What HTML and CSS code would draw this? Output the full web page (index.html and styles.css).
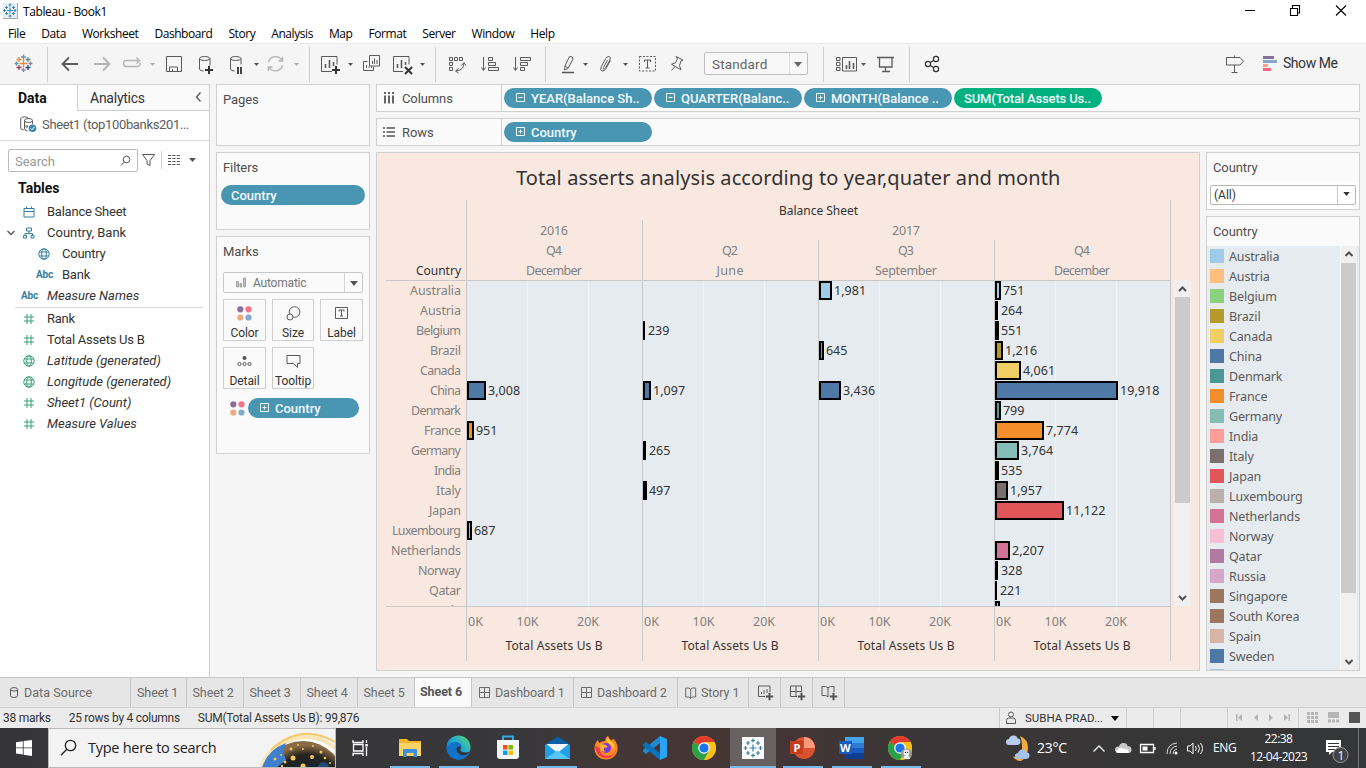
FILE: index.html
```html
<!DOCTYPE html>
<html lang="en">
<head>
<meta charset="utf-8">
<title>Tableau - Book1</title>
<link rel="stylesheet" href="styles.css">
</head>
<body>
<svg class="defs" width="0" height="0">
  <symbol id="caret" viewBox="0 0 8 5"><path d="M0 0h8L4 5z" fill="currentColor"/></symbol>
  <symbol id="cal" viewBox="0 0 12 12"><path d="M1 2.500h10v8.500h-10zM1 5.500h10M3.500 .5v2M8.500 .5v2" class="ln"/></symbol>
  <symbol id="globe" viewBox="0 0 12 12"><circle cx="6" cy="6" r="5.200" class="ln"/><path d="M1.300 4h9.400M1.300 8h9.400" class="ln"/><ellipse cx="6" cy="6" rx="2.300" ry="5.200" class="ln"/></symbol>
  <symbol id="hash" viewBox="0 0 12 12"><path d="M1 4h10M1 8h10M4 1v10M8 1v10" class="ln"/></symbol>
  <symbol id="tree" viewBox="0 0 12 12"><path d="M3.500 1h5v3h-5zM.5 8.500h3v2.500h-3zM8 8.500h3v2.500h-3zM6 4v2.500M2 8.500v-2h7.500v2" class="ln"/></symbol>
  <symbol id="plusbox" viewBox="0 0 10 10"><path d="M.5 .5h8v8h-8zM2.500 4.500h4M4.500 2.500v4" class="ln"/></symbol>
  <symbol id="minusbox" viewBox="0 0 10 10"><path d="M.5 .5h8v8h-8zM2.500 4.500h4" class="ln"/></symbol>
  <symbol id="dots" viewBox="0 0 15 15"><circle cx="3.300" cy="3.300" r="3.100" fill="#8a6f9c"/><circle cx="11.500" cy="3.300" r="3.100" fill="#fb7185"/><circle cx="3.300" cy="11.500" r="3.100" fill="#f2a97d"/><circle cx="11.500" cy="11.500" r="3.100" fill="#84a9cf"/></symbol>
  <symbol id="grid4" viewBox="0 0 12 12"><path d="M.5 .5h10v10h-10zM5.500 .5v10M.5 5.500h10" class="ln"/></symbol>
  <symbol id="book" viewBox="0 0 12 12"><path d="M.7 1h3l2 1.200 2-1.200h3v9h-3l-2 1.300-2-1.300h-3zM5.700 2.200v9" class="ln"/></symbol>
  <symbol id="bigplus" viewBox="0 0 8 8"><path d="M4 0v8M0 4h8" stroke="#555" stroke-width="2"/></symbol>
  <symbol id="chrome" viewBox="0 0 24 24"><circle cx="12" cy="12" r="12" fill="#fbc116"/><path d="M12 12L1.600 6A12 12 0 0 1 22.400 6z" fill="#e33b2e"/><path d="M12 12L1.600 6A12 12 0 0 0 12 24l5.200-9z" fill="#2aa14a"/><path d="M12 6h10.400A12 12 0 0 1 12 24l5.200-9z" fill="#fbc116"/><circle cx="12" cy="12" r="5.800" fill="#fff"/><circle cx="12" cy="12" r="4.600" fill="#1a73e8"/></symbol>
</svg>

<header class="titlebar">
  <svg class="app-icon" width="15" height="16" viewBox="0 0 15 16"><path fill="#e9eef2" d="M0 0h15v16h-15z"/><path d="M14.500 0v15.500h-14.500" stroke="#aaa" fill="none"/><path d="M7 4.500v6M4 7.500h6M7 .5v3M5.500 2h3M7 11.500v3M5.500 13h3M1.500 6v3M0 7.500h3M12 6v3M10.500 7.500h3M3.500 3v3M2 4.500h3M10.500 3v3M9 4.500h3M3.500 9v3M2 10.500h3M10.500 9v3M9 10.500h3" stroke="#3789b5"/></svg>
  <span class="title">Tableau - Book1</span>
  <svg class="winbtns" width="126" height="22" viewBox="1240 0 126 22"><path d="M1245 10.500h10M1290.500 8.500h7v7h-7zM1292.500 8v-2.500h7v7.500h-2M1336 5.500l10 10M1346 5.500l-10 10" fill="none" stroke="#000" stroke-width="1.100"/></svg>
</header>
<nav class="menubar"><span>File</span><span>Data</span><span>Worksheet</span><span>Dashboard</span><span>Story</span><span>Analysis</span><span>Map</span><span>Format</span><span>Server</span><span>Window</span><span>Help</span></nav>

<div class="toolbar">
  <svg width="48" height="40" viewBox="0 44 48 40"><g stroke-width="1.300" fill="none"><path stroke="#ec8a3c" d="M19.500 63.500h8M23.500 59.500v8M16.500 59.500h5M19 57v5"/><path stroke="#6b93b0" d="M21 57h5M23.500 54.500v5M14.500 63.500h4M16.500 61.500v4"/><path stroke="#5b8a92" d="M25.500 59.500h5M28 57v5"/><path stroke="#a0405a" d="M16.500 67.500h5M19 65v5"/><path stroke="#2c4a82" d="M25.500 67.500h5M28 65v5"/><path stroke="#7d88b2" d="M28.500 63.500h4M30.500 61.500v4M21.500 70h4M23.500 68v4"/></g><path d="M47.500 47v35" class="sep"/></svg>
  <svg width="42" height="40" viewBox="48 44 42 40"><path d="M78 64h-15.500M69 57.500l-6.500 6.500 6.500 6.500" class="ic" stroke-width="1.800"/></svg>
  <svg width="28" height="40" viewBox="90 44 28 40"><path d="M94 64h15.500M103 57.500l6.500 6.500-6.500 6.500" class="ic off" stroke-width="1.800"/></svg>
  <svg width="42" height="40" viewBox="118 44 42 40"><path d="M129 66.500h-2.500a3 3 0 0 1 0-6h11.500M136.500 57.500l3 3-3 3M129 66.500h8.500a3 3 0 0 0 2.500-4" class="ic off" stroke-width="1.400"/><path d="M150 63h5l-2.500 3z" fill="#aaa"/></svg>
  <svg width="28" height="40" viewBox="160 44 28 40"><path d="M166.500 56.500h15v15h-15zM169.500 71.500v-4.500h8v4.500M172.500 69v2.500" class="ic"/></svg>
  <svg width="32" height="40" viewBox="188 44 32 40"><path d="M199.500 58.500v10.500q0 2 4 2M210 58.500v7" class="ic"/><ellipse cx="204.700" cy="58.500" rx="5.200" ry="2" class="ic"/><path d="M209 66v8M205 70h8" stroke="#333" stroke-width="2"/></svg>
  <svg width="42" height="40" viewBox="220 44 42 40"><path d="M230.500 58.500v10.500q0 2 4 2M241 58.500v6" class="ic"/><ellipse cx="235.700" cy="58.500" rx="5.200" ry="2" class="ic"/><path d="M238 67v7M241 67v7" stroke="#333" stroke-width="1.800"/><path d="M254 63h5l-2.500 3z" fill="#555"/></svg>
  <svg width="43" height="40" viewBox="262 44 43 40"><path d="M268.500 62a7.300 7.300 0 0 1 13.500-1.500M282.500 65.500a7.300 7.300 0 0 1-13.500 1.500M282.500 57v4h-4M268.500 71v-4h4" class="ic off" stroke-width="1.400"/><path d="M294 63h5l-2.500 3z" fill="#aaa"/></svg>
  <svg width="52" height="40" viewBox="305 44 52 40"><path d="M309.500 47v35" class="sep"/><path d="M332 71.500h-10.500v-15h15.500v8" class="ic"/><path d="M325.500 64v4M329.500 60v8M333.500 62v4" class="ic" stroke-width="1.600"/><path d="M336 66v8M332 70h8" stroke="#333" stroke-width="2"/><path d="M348 63h5l-2.500 3z" fill="#555"/></svg>
  <svg width="29" height="40" viewBox="357 44 29 40"><path d="M369.500 55.500h10v10.500h-10zM367.500 61.500h-4v9h10v-3.500M366.500 65v3M369 68v-1.500M371.500 68v-1.500M372.500 61v3M374.500 58.500v5.500M377 60v4" class="ic"/></svg>
  <svg width="50" height="40" viewBox="386 44 50 40"><path d="M403 71.500h-9.500v-15h15.500v8" class="ic"/><path d="M397.500 64v4M401.500 60v8M405.500 62v3" class="ic" stroke-width="1.600"/><path d="M405 67l7 7M412 67l-7 7" stroke="#333" stroke-width="2"/><path d="M420 63h5l-2.500 3z" fill="#555"/><path d="M435.500 47v35" class="sep"/></svg>
  <svg width="38" height="40" viewBox="436 44 38 40"><path d="M449.500 57.500h3v3h-3zM454.500 57.500h3v3h-3zM459.500 57.500h3v3h-3zM449.500 62.500h3v3h-3zM449.500 67.500h3v3h-3zM464 63q0 7-8 8M461.500 65.500l2.500-3 2 3M458.500 68.500l-3 2.500 3 2" class="ic"/></svg>
  <svg width="32" height="40" viewBox="474 44 32 40"><path d="M483.500 57v13M481.500 67.500l2 3 2-3M488.500 57.500h4v3h-4zM488.500 62.500h7v3h-7zM488.500 67.500h10v3h-10z" class="ic"/></svg>
  <svg width="40" height="40" viewBox="506 44 40 40"><path d="M515.500 57v13M513.500 67.500l2 3 2-3M520.500 57.500h10v3h-10zM520.500 62.500h7v3h-7zM520.500 67.500h4v3h-4z" class="ic"/><path d="M545.500 47v35" class="sep"/></svg>
  <svg width="46" height="40" viewBox="546 44 46 40"><path d="M569.500 56.500q3.500-.5 3.500 2.500l-5 9.500-3.500 1.500.5-4zM565 66l3 2" class="ic"/><path d="M562 72.500h12" stroke="#555" stroke-width="1.500"/><path d="M583 63h5l-2.500 3z" fill="#555"/></svg>
  <svg width="40" height="40" viewBox="592 44 40 40"><path d="M607.500 60l-4 7.500q-.8 2 .8 1.500 1-.3 1.500-1.500l4-7.500q1.500-3.500-1-3.500-2 0-3 2l-4.500 8q-1.500 4 .7 4.500 2.500.5 4-2.500l4.500-8" class="ic"/><path d="M623 63h5l-2.500 3z" fill="#555"/></svg>
  <svg width="30" height="40" viewBox="632 44 30 40"><path d="M639.500 56.500h16v14.500h-16z" class="ic" stroke-dasharray="2 1.500" stroke="#888"/><path d="M644.500 62v-2h6v2M647.500 60v8M645.500 68h4" class="ic"/></svg>
  <svg width="42" height="40" viewBox="662 44 42 40"><path d="M676 56.500l7 3.500-2 .8-1.500 5 1.500 4-9.500-5.500 4-1.500 2-4zM675 66.500l-3.500 4" class="ic"/></svg>
  <div class="fit-select"><span>Standard</span><i><svg width="8" height="5"><use href="#caret"/></svg></i></div>
  <svg width="60" height="40" viewBox="808 44 60 40"><path d="M823.500 47v35" class="sep"/><path d="M836.500 57.500h3.500v3h-3.500zM836.500 62.500h3.500v3h-3.500zM836.500 67.500h3.500v3h-3.500zM842.500 57.500h14v13.500h-14z" class="ic"/><path d="M846.500 65v4M849.500 61v8M853.500 63v6" class="ic" stroke-width="1.600"/><path d="M861 63h5l-2.500 3z" fill="#555"/></svg>
  <svg width="42" height="40" viewBox="868 44 42 40"><path d="M877 57.500h17M879.500 57.500v9.500h12.500v-9.500M885.500 67v4M882 71.500h8" class="ic" stroke-width="1.300"/><path d="M909.500 47v35" class="sep"/></svg>
  <svg width="40" height="40" viewBox="910 44 40 40"><g class="share" fill="none" stroke="#333" stroke-width="1.200"><circle cx="928" cy="64" r="2.600"/><circle cx="936" cy="59" r="2.600"/><circle cx="936" cy="69" r="2.600"/><path d="M930.500 62.500l3-2M930.500 65.500l3 2"/></g></svg>
  <svg class="push" width="36" height="40" viewBox="1222 44 36 40"><path d="M1226.500 57.500h13.500l3.500 3.700-3.500 3.800h-13.500zM1234.500 55.500v2M1234.500 65v7.500M1231.500 72.500h6" class="ic"/></svg>
  <svg width="25" height="40" viewBox="1258 44 25 40"><path fill="#86719a" d="M1263 56h11v3h-11z"/><path fill="#82a5cb" d="M1263 60h14v3h-14z"/><path fill="#f2a97d" d="M1263 64h5v3h-5z"/><path fill="#f9687e" d="M1263 68h8v3h-8z"/></svg>
  <span class="showme">Show Me</span>
</div>

<main class="work">
  <aside class="data-pane">
    <div class="pane-tabs"><b>Data</b><span>Analytics<svg width="8" height="10" viewBox="0 0 8 10"><path d="M5.500 .5l-4 4.500 4 4.500" class="ic" stroke-width="1.400"/></svg></span></div>
    <div class="source"><svg width="17" height="17" viewBox="0 0 17 17"><path d="M.7 2.500v9.500q0 1.500 3 2M.7 2.500q4-3.500 8 0M4.500 4.500v8q0 2 3 2.500M12.500 5v3" class="ic"/><ellipse cx="8.500" cy="4.500" rx="4" ry="2" class="ic"/><path d="M5 10h3l-1.500 2" class="ic"/><circle cx="12.500" cy="12.300" r="3.800" fill="#3887ad"/><path d="M10.500 12.300l1.500 1.500 2.500-3" stroke="#fff" fill="none"/></svg><span>Sheet1 (top100banks201...</span></div>
    <div class="search-row">
      <div class="search"><span>Search</span><svg width="12" height="12" viewBox="0 0 12 12"><circle cx="6.500" cy="4.500" r="3.300" class="ic"/><path d="M4.200 7l-3.200 3.500" class="ic"/></svg></div>
      <svg width="60" height="23" viewBox="138 149 60 23"><path d="M142.500 154.500h12l-4.500 6v5l-3-1.500v-3.500z" class="ic"/><path d="M161.500 151v18" class="sep"/><path d="M168 155.500h12M168 158.500h12M168 161.500h12M168 164.500h12" stroke="#555" stroke-dasharray="3.200 1.200"/><path d="M189 158h7l-3.500 4z" fill="#555"/></svg>
    </div>
    <h3>Tables</h3>
    <ul class="fields dims">
      <li class="blue"><svg width="12" height="12"><use href="#cal"/></svg>Balance Sheet</li>
      <li class="blue grp"><svg class="chev" width="8" height="6" viewBox="0 0 8 6"><path d="M.5 1l3.500 3.500 3.500-3.500" class="ic" stroke-width="1.500"/></svg><svg width="12" height="12"><use href="#tree"/></svg>Country, Bank</li>
      <li class="blue sub"><svg width="12" height="12"><use href="#globe"/></svg>Country</li>
      <li class="blue sub"><em class="abc">Abc</em>Bank</li>
      <li class="blue gen"><em class="abc">Abc</em>Measure Names</li>
    </ul>
    <ul class="fields">
      <li class="green"><svg width="12" height="12"><use href="#hash"/></svg>Rank</li>
      <li class="green"><svg width="12" height="12"><use href="#hash"/></svg>Total Assets Us B</li>
      <li class="green gen"><svg width="12" height="12"><use href="#globe"/></svg>Latitude (generated)</li>
      <li class="green gen"><svg width="12" height="12"><use href="#globe"/></svg>Longitude (generated)</li>
      <li class="green gen"><svg width="12" height="12"><use href="#hash"/></svg>Sheet1 (Count)</li>
      <li class="green gen"><svg width="12" height="12"><use href="#hash"/></svg>Measure Values</li>
    </ul>
  </aside>

  <section class="cards">
    <div class="card pages"><h4>Pages</h4></div>
    <div class="card filters"><h4>Filters</h4><div class="pill plain">Country</div></div>
    <div class="card marks"><h4>Marks</h4>
      <div class="mark-type"><svg width="10" height="11" viewBox="0 0 10 11"><path d="M.5 4.500h2v5.500h-2zM4 6.500h1.500v3.500h-1.500zM7.500 1h2v9h-2z" fill="#bbb" stroke="#999" stroke-width=".8"/></svg><span>Automatic</span><i><svg width="8" height="5"><use href="#caret"/></svg></i></div>
      <div class="mark-grid">
        <div><svg width="15" height="15"><use href="#dots"/></svg><span>Color</span></div>
        <div><svg width="15" height="15" viewBox="0 0 15 15"><circle cx="8.500" cy="6" r="5.300" class="ic"/><circle cx="4" cy="11" r="3" class="ic cover"/></svg><span>Size</span></div>
        <div><svg width="15" height="15" viewBox="0 0 15 15"><path d="M1.500 1.500h12v11h-12zM5 5.500v-1.500h5v1.500M7.500 4v6M6 10h3" class="ic"/></svg><span>Label</span></div>
        <div><svg width="15" height="15" viewBox="0 0 15 15"><circle cx="7.500" cy="4" r="2" fill="#555"/><circle cx="2.500" cy="10" r="1.600" class="ic"/><circle cx="7.500" cy="10" r="1.600" class="ic"/><circle cx="12.500" cy="10" r="1.600" class="ic"/></svg><span>Detail</span></div>
        <div><svg width="15" height="15" viewBox="0 0 15 15"><path d="M1 1.500h13v8h-2.500v4l-4-4h-6.500z" class="ic"/></svg><span>Tooltip</span></div>
      </div>
      <div class="mark-pill"><svg width="15" height="15"><use href="#dots"/></svg><div class="pill"><svg width="10" height="10"><use href="#plusbox"/></svg>Country</div></div>
    </div>
  </section>

  <div class="canvas">
    <div class="shelf"><div class="shelf-name"><svg width="12" height="12" viewBox="0 0 12 12"><path d="M2 0v2M2 3.500v8M6 0v2M6 3.500v8M10 0v2M10 3.500v8" stroke="#555" stroke-width="1.800"/></svg>Columns</div>
      <div class="pill"><svg width="10" height="10"><use href="#minusbox"/></svg>YEAR(Balance Sh..</div><div class="pill"><svg width="10" height="10"><use href="#minusbox"/></svg>QUARTER(Balanc..</div><div class="pill"><svg width="10" height="10"><use href="#plusbox"/></svg>MONTH(Balance ..</div><div class="pill plain measure">SUM(Total Assets Us..</div></div>
    <div class="shelf"><div class="shelf-name"><svg width="12" height="12" viewBox="0 0 12 12"><path d="M0 2h2M3.500 2h8.500M0 6h2M3.500 6h8.500M0 10h2M3.500 10h8.500" stroke="#555" stroke-width="1.700"/></svg>Rows</div>
      <div class="pill"><svg width="10" height="10"><use href="#plusbox"/></svg>Country</div></div>
    <div class="view-row">
      <div class="view"><svg id="chart" width="822" height="517" viewBox="377 153 822 517"></svg></div>
      <div class="side">
        <div class="filter-card"><h4>Country</h4><div class="combo"><span>(All)</span><i><svg width="7" height="4"><use href="#caret"/></svg></i></div></div>
        <div class="legend"><h4>Country</h4><div class="legend-body"><ul id="legend"></ul>
          <div class="scroll"><svg width="16" height="16" viewBox="0 0 16 16"><path d="M4.500 10l3.500-3.500 3.500 3.500" class="arr"/></svg><b></b><svg class="down" width="16" height="16" viewBox="0 0 16 16"><path d="M4.500 6l3.500 3.500 3.500-3.500" class="arr"/></svg></div></div></div>
      </div>
    </div>
  </div>
</main>

<div class="sheets">
  <span class="tab ds"><svg width="10" height="12" viewBox="0 0 10 12"><ellipse cx="5" cy="2.300" rx="3.500" ry="1.700" class="ic"/><path d="M1.500 2.300v6.500q0 1.700 3.500 1.700t3.500-1.700v-6.500" class="ic"/></svg>Data Source</span>
  <span class="tab s1">Sheet 1</span><span class="tab">Sheet 2</span><span class="tab">Sheet 3</span><span class="tab">Sheet 4</span><span class="tab">Sheet 5</span><span class="tab on">Sheet 6</span>
  <span class="tab d1"><svg width="12" height="12"><use href="#grid4"/></svg>Dashboard 1</span><span class="tab d2"><svg width="12" height="12"><use href="#grid4"/></svg>Dashboard 2</span><span class="tab st"><svg width="12" height="12"><use href="#book"/></svg>Story 1</span>
  <span class="tab new"><svg width="17" height="16" viewBox="0 0 17 16"><path d="M8 11.500h-6.500v-10.500h11.500v6M4.500 7v2M7 5v4M10 4v4" class="ic"/><use href="#bigplus" x="8.500" y="7.500" width="8" height="8"/></svg></span>
  <span class="tab new"><svg width="17" height="16" viewBox="0 0 17 16"><path d="M8 11.500h-6.500v-10.500h11v6M7 1v10.500M1.500 6.500h11" class="ic"/><use href="#bigplus" x="8.500" y="7.500" width="8" height="8"/></svg></span>
  <span class="tab new"><svg width="17" height="16" viewBox="0 0 17 16"><path d="M1 1.500h3.500l2.500 1.300 2.500-1.300h3.500v5.500M1 1.500v9h3.500l2.500 1.300M7 3v9" class="ic"/><use href="#bigplus" x="8.500" y="7.500" width="8" height="8"/></svg></span>
</div>

<div class="status">
  <span>38 marks</span><span>25 rows by 4 columns</span><span>SUM(Total Assets Us B): 99,876</span>
  <div class="user"><svg width="12" height="14" viewBox="0 0 12 14"><circle cx="6" cy="3.500" r="2.500" class="ic"/><path d="M1.500 12.500v-3q0-2.500 2.500-2.500h4q2.500 0 2.500 2.500v3z" class="ic"/></svg><span>SUBHA PRAD...</span><svg class="uc" width="8" height="5"><use href="#caret"/></svg></div>
  <svg class="status-end" width="240" height="20" viewBox="1126 708 240 20"><path d="M1126.500 708v20M1153.500 708v20M1180.500 708v20M1227.500 708v20M1298.500 708v20" class="sep"/><g fill="#b5b5b5"><path d="M1236 714h1.500v7h-1.500zM1242 714v7l-4-3.500zM1258 714v7l-4-3.500zM1269 714v7l4-3.500zM1284 714v7l4-3.500zM1288.500 714h1.500v7h-1.500z"/><path d="M1307 712h3v3h-3zM1311 712h3v3h-3zM1315 712h3v3h-3zM1307 716h3v3h-3zM1311 716h3v3h-3zM1315 716h3v3h-3zM1307 720h3v3h-3zM1311 720h3v3h-3zM1315 720h3v3h-3zM1328 712h11v6h-11zM1328 719.500h3v3h-3zM1332 719.500h3v3h-3zM1336 719.500h3v3h-3z"/></g><path fill="#555" d="M1349 712h11v11h-11z"/></svg>
</div>

<footer class="taskbar">
  <div class="start"><svg width="16" height="16" viewBox="0 0 16 16"><path fill="#fff" d="M0 2.200l6.800-1v6.300h-6.800zM7.600 1.100l8.400-1.100v7.500h-8.400zM0 8.300h6.800v6.300l-6.800-1zM7.600 8.300h8.400v7.700l-8.400-1.200z"/></svg></div>
  <div class="win-search"><svg width="17" height="17" viewBox="0 0 17 17"><circle cx="10.500" cy="6.500" r="5.200" fill="none" stroke="#222" stroke-width="1.300"/><path d="M6.800 10.200l-5.800 6" stroke="#222" stroke-width="1.300"/></svg><span>Type here to search</span>
    <svg class="earth" width="76" height="38" viewBox="260 729 76 38"><defs><radialGradient id="eg" cx=".55" cy=".6" r=".55"><stop offset=".5" stop-color="#14232e"/><stop offset=".8" stop-color="#27241f"/><stop offset="1" stop-color="#8a6b45"/></radialGradient></defs><circle cx="305" cy="780" r="46" fill="#f9e4b5"/><path d="M272 750q30-28 64-8" stroke="#f5c86c" fill="none" stroke-width="2"/><circle cx="307" cy="782" r="43" fill="#fff"/><circle cx="304" cy="783" r="42" fill="url(#eg)"/><path d="M263 768q5-18 24-25l-3 9 3 8-10 8z" fill="#3f7fd0"/><path d="M318 768q5-10 12-3l-2 3z" fill="#244a75"/><g fill="#f1c65a"><circle cx="294" cy="758" r="2.500"/><circle cx="313" cy="757" r="2"/><circle cx="304" cy="766" r="2.500"/><circle cx="286" cy="762" r="1.500"/><circle cx="292" cy="749" r="1.500"/><circle cx="304" cy="749" r="1"/><circle cx="322" cy="752" r="1.500"/><circle cx="326" cy="758" r="1.300"/><circle cx="276" cy="759" r="1.500"/><circle cx="299" cy="745" r="1"/><circle cx="314" cy="746" r="1"/><circle cx="331" cy="763" r="1"/><circle cx="282" cy="755" r="1"/><circle cx="283" cy="766" r="1.200"/></g></svg></div>
  <div class="app"><svg width="18" height="18" viewBox="0 0 18 18"><path d="M1 1v2.500h10v-2.500M1.500 5.500h9.500v6.500h-9.500zM1 17v-2.500h10v2.500M14.500 1v3M14.500 8v9" fill="none" stroke="#fff" stroke-width="1.300"/><path d="M13.300 5h2.500v2.500h-2.500z" fill="#fff"/></svg></div>
  <div class="app run"><svg width="24" height="24" viewBox="0 0 24 24"><path d="M1 3h8l2 2h12v15h-22z" fill="#f0b429"/><path d="M1 7h22v13h-22z" fill="#fcd365"/><path d="M5 21v-7q0-1 1-1h12q1 0 1 1v7h-3.500v-4h-7v4z" fill="#3b8ee0"/></svg></div>
  <div class="app run"><svg width="25" height="25" viewBox="0 0 25 25"><defs><linearGradient id="ed" x1="0" y1="1" x2="1" y2="0"><stop offset="0" stop-color="#0c59a4"/><stop offset=".5" stop-color="#1fa2d8"/><stop offset="1" stop-color="#58dc6b"/></linearGradient></defs><circle cx="12.500" cy="12.500" r="12" fill="url(#ed)"/><path d="M.6 14q2-7 9-7 5 0 6 4 0 3-2 4 1 3 6 3 3 0 4-1-3 7-11 7.500-10-.5-12-10.500z" fill="#1273ca"/><path d="M10.500 13.500q.5-2.500 3.500-2 2 1.500 0 3.500 1 2.500 6 2.500 3 0 4.500-2-3.500 6-9.500 4.500-4.500-2-4.500-6.500z" fill="#353536"/></svg></div>
  <div class="app"><svg width="24" height="25" viewBox="0 0 24 25"><path d="M7 5v-3.500h10v3.500" fill="none" stroke="#35a9e8" stroke-width="2"/><path d="M1 5h22v16q0 3-3 3h-16q-3 0-3-3z" fill="#f4f6f8"/><path fill="#f25022" d="M7 10h4.500v4.500h-4.500z"/><path fill="#7fba00" d="M12.500 10h4.500v4.500h-4.500z"/><path fill="#00a4ef" d="M7 15.500h4.500v4.500h-4.500z"/><path fill="#ffb900" d="M12.500 15.500h4.500v4.500h-4.500z"/></svg></div>
  <div class="app run"><svg width="25" height="24" viewBox="0 0 25 24"><path d="M0 8.500l12.500-8 12.500 8z" fill="#0a5ea8"/><path d="M0 8.500h25v14.500h-25z" fill="#1f9fe8"/><path d="M1.500 8h22l-11 9z" fill="#f5f8fb"/><path d="M0 23l12.500-8.500 12.500 8.500z" fill="#58c5f7"/></svg></div>
  <div class="app"><svg width="24" height="25" viewBox="0 0 24 25"><path d="M12 24.500c-7 0-11.500-5-11.500-11 0-4 1.500-6.500 3.500-8.500l1 3q3-2 6-2 0-3 3-5.500 1 4 4 5l1-2q4.500 4 4.500 10c0 6-4.500 11-11.500 11z" fill="#ff8a1e"/><path d="M1 11c1 9 6 12 12 12 6-1 9-5 9-9-1 5-5 7-9 7-5 0-8-4-7-8z" fill="#f2384e"/><path d="M14 2q1 4 4 5 3 3 2 8-2-6-7-8-1-2 1-5z" fill="#ffd23c"/><circle cx="12" cy="13" r="5" fill="#7a3bd6"/><path d="M6 10q5-2 8 2l-4 1q-1 3 2 4-5 0-6-4z" fill="#ffb13a"/></svg></div>
  <div class="app"><svg width="24" height="24" viewBox="0 0 24 24"><path d="M17 0l7 3v18l-7 3z" fill="#2aa5f3"/><path d="M17 0v7l-14 11-3-2.500v-1.500z" fill="#1f8ad2"/><path d="M17 24v-7l-14-11-3 2.500v1.500z" fill="#0b73bd"/></svg></div>
  <div class="app"><svg width="24" height="24"><use href="#chrome"/></svg></div>
  <div class="app run active"><svg width="22" height="22" viewBox="0 0 22 22"><path fill="#fff" d="M0 0h22v22h-22z"/><path d="M11 7.500v7M7.500 11h7M11 1.500v4M9 3.500h4M11 16.500v4M9 18.500h4M3.500 9v4M1.500 11h4M18.500 9v4M16.500 11h4M6 4v4M4 6h4M16 4v4M14 6h4M6 14v4M4 16h4M16 14v4M14 16h4" stroke="#3b7fa6" stroke-width="1.200"/></svg></div>
  <div class="app run"><svg width="25" height="24" viewBox="0 0 25 24"><circle cx="14" cy="12" r="11" fill="#d9512f"/><path d="M14 1a11 11 0 0 1 11 11h-11z" fill="#ff9a7a"/><path d="M0 5h13v13h-13z" fill="#c43e1c"/><text x="3.500" y="15.500" class="office">P</text></svg></div>
  <div class="app run"><svg width="25" height="24" viewBox="0 0 25 24"><path d="M6 1h19v6h-19z" fill="#41a5ee"/><path d="M6 7h19v5h-19z" fill="#2b7cd3"/><path d="M6 12h19v5h-19z" fill="#185abd"/><path d="M6 17h19v6h-19z" fill="#103f91"/><path d="M0 5h13v13h-13z" fill="#185abd"/><text x="1" y="15.500" class="office">W</text></svg></div>
  <div class="app run"><svg width="25" height="24" viewBox="0 0 25 24"><use href="#chrome" width="24" height="24"/><circle cx="18.500" cy="18" r="5.500" fill="#9a9c90"/><circle cx="18.500" cy="16.500" r="3" fill="#f4f2ee"/><path d="M15.500 23q0-4 3-4t3.500 4z" fill="#eee"/><circle cx="17.500" cy="16.300" r=".6"/><circle cx="19.700" cy="16.300" r=".6"/></svg></div>
  <svg class="weather" width="28" height="28" viewBox="0 0 28 28"><path d="M15 2q8 3 8 12t-7 13q-5 0-8-4 10-1 9-11 0-6-2-10z" fill="#f4ad3d"/><path d="M4 11q-3 0-3-3t3-3q1-4 5-3.500 3 0 3.500 3 3 0 3 3t-3 3.500z" fill="#b6cdf2"/><path d="M13 25q-3 0-3-3t3-3q1-3.500 4.500-3.500t4 3q3 0 3 3t-3 3.500z" fill="#a6c3ee"/></svg>
  <span class="temp">23°C</span>
  <svg class="tray" width="120" height="40" viewBox="1088 728 120 40"><path d="M1093.500 751.500l5.500-5.500 5.500 5.500" fill="none" stroke="#fff" stroke-width="1.300"/><path d="M1118 753q-3-1-3-3.500 0-3 4-3 1-4 5-3.500 3 0 3.500 3 4 0 4 3.500t-3 3.500z" fill="#c8c8c8"/><path d="M1117 753q-2-2 1-3.500 2-3 5.500-.5 5-1 5 4z" fill="#fff"/><path d="M1140.500 744.500h13v8h-13zM1155 747v3" fill="none" stroke="#fff" stroke-width="1.300"/><path d="M1142.500 746.500h5v4h-5z" fill="#fff"/><path d="M1167 754q0-10 10-11M1170 754q0-7 7-8M1173 754q0-4.500 4-5" fill="none" stroke="#ddd"/><circle cx="1176" cy="753" r="1.500" fill="#fff"/><path d="M1187.500 746h2.500l3-3v11l-3-3h-2.500zM1195.500 746q1.500 2.500 0 5M1198 744.500q3 4 0 8M1200.500 743q4 5.500 0 11" fill="none" stroke="#fff"/></svg>
  <span class="lang">ENG</span>
  <div class="clock"><span>22:38</span><span>12-04-2023</span></div>
  <svg class="notes" width="46" height="40" viewBox="1312 728 46 40"><path d="M1326 740h15v12h-9l-3 3v-3h-3z" fill="#fff"/><path d="M1328 743.500h11M1328 746.500h11M1328 749.500h7" stroke="#333"/><circle cx="1340.500" cy="755" r="7.500" fill="#444" stroke="#999"/><text x="1337.500" y="759.500" class="badge">1</text></svg>
  <i class="peek"></i>
</footer>
<script src="app.js"></script>
</body>
</html>
```

FILE: styles.css
```css
* { box-sizing: border-box; }
body { margin: 0; width: 1366px; height: 768px; overflow: hidden; background: #f5f5f5; font-family: Roboto, "Liberation Sans", sans-serif; font-size: 13px; color: #333; display: flex; flex-direction: column; }
h3, h4, ul { margin: 0; padding: 0; font-weight: 400; list-style: none; }
svg { display: block; flex: none; }
i, em { font-style: normal; }
span, li, h4, .pill { white-space: nowrap; }
.defs { position: absolute; }
.ln { fill: none; stroke: currentColor; stroke-width: 1; }
.ic { fill: none; stroke: #5a5a5a; }
.ic.off { stroke: #b4b4b4; }
.ic.cover { fill: #fafafa; }
.sep { stroke: #cfcfcf; fill: none; }

.titlebar { height: 24px; background: #fff; display: flex; align-items: flex-start; padding-left: 3px; font: 12px "Open Sans", sans-serif; color: #000; }
.app-icon { margin-top: 3px; }
.title { margin-left: 5px; line-height: 23px; letter-spacing: -.4px; }
.winbtns { margin-left: auto; }
.menubar { height: 19px; background: #fff; display: flex; gap: 16px; padding-left: 8px; font: 12px/20px "Open Sans", sans-serif; color: #000; letter-spacing: -.43px; }
.toolbar { height: 41px; border-top: 1px solid #ebebeb; display: flex; }
.fit-select { width: 104px; height: 23px; margin-top: 8px; border: 1px solid #bfbfbf; border-radius: 2px; background: #f8f8f8; display: flex; justify-content: space-between; padding-left: 7px; font-size: 13.500px; line-height: 22px; letter-spacing: .15px; color: #666; }
.fit-select i { width: 18px; border-left: 1px solid #ddd; padding: 9px 0 0 4px; }
.push { margin-left: auto; }
.showme { font-size: 14px; line-height: 39px; width: 83px; color: #333; letter-spacing: -.45px; }

.work { height: 593px; display: flex; }
.data-pane { width: 210px; background: #fff; border-right: 1px solid #cfcfcf; }
.pane-tabs { display: flex; height: 27px; border-top: 1px solid #d4d4d4; font-size: 14px; line-height: 26px; }
.pane-tabs b { width: 77px; padding-left: 18px; color: #111; }
.pane-tabs span { flex: 1; display: flex; justify-content: space-between; padding: 0 6px 0 12px; background: #fafafa; border-left: 1px solid #cfcfcf; border-bottom: 1px solid #cfcfcf; letter-spacing: -.25px; }
.pane-tabs svg { margin-top: 7px; }
.source { height: 30px; border-bottom: 1px solid #ddd; display: flex; gap: 5px; padding: 5px 0 0 20px; line-height: 18px; color: #5c5c5c; letter-spacing: -.34px; }
.search-row { display: flex; padding: 8px 0 0 8px; height: 31px; }
.search { width: 130px; height: 23px; border: 1px solid #bbb; border-radius: 2px; padding: 5px 5px 0 6px; display: flex; justify-content: space-between; line-height: 13px; color: #999; }
.data-pane h3 { font-weight: 700; font-size: 14px; line-height: 18px; padding: 7px 0 0 18px; height: 29px; color: #111; }
.fields { margin-left: 15px; width: 188px; }
.fields.dims { height: 107px; border-bottom: 1px solid #dcdcdc; }
.fields li { height: 21px; display: flex; align-items: center; padding-left: 8px; color: #333; letter-spacing: -.24px; }
.fields li svg, .fields li .abc { margin-right: 12px; width: 12px; }
.fields li.sub { padding-left: 23px; }
.fields li svg.chev { width: 8px; margin: 0 8px 0 -16px; }
.fields li.grp { letter-spacing: 0; }
.blue svg, .blue .abc { color: #33809f; }
.green svg { color: #3a9f78; }
.fields svg.chev { color: #555; }
.fields .abc { font-size: 10px; font-weight: 700; text-indent: -2px; overflow: visible; font-style: normal; letter-spacing: -.2px; }
.fields li.gen { font-style: italic; letter-spacing: 0; }

.cards { width: 167px; padding-left: 6px; display: flex; flex-direction: column; gap: 6px; }
.card, .shelf, .filter-card, .legend { background: #fafafa; border: 1px solid #d0d0d0; }
.card { width: 154px; }
.card h4 { padding-left: 6px; line-height: 30px; height: 32px; color: #505050; letter-spacing: -.1px; }
.pages { height: 62px; }
.filters { height: 78px; }
.marks { height: 218px; }
.pill { height: 20px; border-radius: 10px; background: #4996b2; color: #f4fafc; display: flex; align-items: center; padding-left: 12px; gap: 5px; width: 148px; font-weight: 500; font-size: 13px; }
.pill.plain { padding-left: 10px; }
.pill.measure { background: #00b180; letter-spacing: -.15px; }
.filters .pill { width: 144px; margin-left: 4px; }
.mark-type { margin: 3px 0 0 6px; width: 140px; height: 21px; border: 1px solid #c8c8c8; border-radius: 2px; display: flex; line-height: 20px; color: #777; padding-left: 12px; font-size: 12px; letter-spacing: -.2px; }
.mark-type svg { margin-top: 4px; }
.mark-type span { margin-left: 7px; }
.mark-type i { margin-left: auto; width: 18px; border-left: 1px solid #d4d4d4; padding: 4px 0 0 5px; color: #555; }
.mark-grid { margin: 6px 0 0 6px; display: grid; grid-template-columns: 43px 42px 43px; gap: 6px; }
.mark-grid div { height: 42px; border: 1px solid #cfcfcf; display: flex; flex-direction: column; align-items: center; padding-top: 6px; }
.mark-grid span { line-height: 14px; margin-top: 5px; font-size: 12px; letter-spacing: -.1px; }
.mark-pill { display: flex; padding: 9px 0 0 13px; align-items: center; gap: 3px; }
.mark-pill .pill { width: 111px; }

.canvas { width: 984px; margin-left: -1px; }
.shelf { height: 28px; margin-bottom: 6px; display: flex; align-items: center; gap: 2px; }
.shelf-name { width: 125px; height: 26px; border-right: 1px solid #cfcfcf; display: flex; align-items: center; gap: 7px; padding-left: 6px; color: #505050; letter-spacing: -.1px; }
.view-row { display: flex; gap: 6px; }
.view { width: 824px; height: 519px; border: 1px solid #d0d0d0; background: #f9e8e0; }
.side { display: flex; flex-direction: column; gap: 6px; }
.filter-card { width: 154px; height: 58px; background: #fff; }
.side h4 { height: 29px; line-height: 30px; padding-left: 6px; background: #fafafa; color: #505050; letter-spacing: -.1px; }
.combo { margin: 3px 0 0 3px; width: 146px; height: 20px; border: 1px solid #b8b8b8; border-radius: 2px; display: flex; justify-content: space-between; line-height: 19px; padding-left: 3px; background: #fff; font-size: 12px; }
.combo i { width: 18px; border-left: 1px solid #ccc; padding: 6px 0 0 5px; }
.legend { width: 154px; height: 455px; overflow: hidden; }
.legend-body { display: flex; height: 424px; background: #e6ebef; }
.legend-body ul { width: 133px; overflow: hidden; }
.legend-body li { height: 20px; padding: 2px 0 0 3px; display: flex; gap: 5px; font: 12.500px/17px "Noto Sans", sans-serif; color: #5a5a5a; letter-spacing: -.15px; }
.legend-body li i { width: 14px; height: 14px; margin-top: 1px; }
.scroll { width: 17px; background: #f0f0f0; border-left: 1px solid #fff; display: flex; flex-direction: column; }
.scroll b { height: 330px; width: 15px; background: #cbcbcb; margin-top: 1px; }
.scroll .down { margin-top: auto; }
.arr { fill: none; stroke: #505050; stroke-width: 2; }

.sheets { height: 31px; background: #e6e6e6; border-top: 1px solid #c8c8c8; border-bottom: 1px solid #d0d0d0; display: flex; line-height: 30px; color: #6a6a6a; font-size: 12.500px; letter-spacing: -.08px; }
.tab { width: 57px; border-right: 1px solid #c6c6c6; padding-left: 5.500px; display: flex; gap: 4px; align-items: center; }
.tab.ds { width: 131px; padding-left: 9px; gap: 5px; letter-spacing: .05px; }
.tab.s1 { width: 56px; padding-left: 6px; }
.tab.on { background: #fafafa; font-weight: 700; font-size: 12.500px; color: #555; padding-left: 5px; line-height: 28px; align-items: flex-start; letter-spacing: -.1px; }
.tab.d1 { width: 102px; padding-left: 7px; }
.tab.d2 { width: 104px; padding-left: 7px; }
.tab.st { width: 71px; padding-left: 7px; }
.tab.new { width: 32px; padding-left: 8px; }
.status { height: 20px; background: #ebebeb; display: flex; gap: 18px; padding-left: 3px; font-size: 12px; line-height: 20px; color: #333; letter-spacing: -.27px; }
.user { width: 127px; margin-left: auto; margin-right: -18px; border-left: 1px solid #c8c8c8; display: flex; padding-left: 5px; align-items: center; letter-spacing: 0; }
.user span { margin: 0 8px 0 8px; font-size: 11.500px; }
.user .uc { color: #000; }

.taskbar { height: 40px; background: linear-gradient(90deg, #353538 0, #38383a 38%, #463636 48%, #433535 58%, #393637 68%, #353637 100%); display: flex; color: #fff; font-family: "Open Sans", sans-serif; }
.start { width: 48px; padding: 12px 0 0 16px; }
.win-search { width: 288px; margin-right: 4.500px; border: 1px solid #bbb; background: #f3f3f3; display: flex; padding-left: 11px; color: #222; font-size: 14.500px; line-height: 38px; }
.win-search > svg:first-child { margin-top: 10px; }
.win-search span { margin-left: 11px; letter-spacing: -.27px; }
.earth { margin-left: auto; }
.app { width: 40px; margin-right: 9.150px; display: flex; align-items: center; justify-content: center; border-bottom: 2px solid transparent; padding-top: 1px; }
.app.run { border-bottom-color: #76b9ed; }
.app.active { width: 46px; margin: 0 6.500px 0 -3.500px; background: #686061; }
.office { font: 700 11px "Open Sans", sans-serif; fill: #fff; }
.weather { margin: 6px 0 0 75px; }
.temp { font-size: 14px; line-height: 39px; margin-left: 4px; letter-spacing: -.3px; }
.tray { margin-left: auto; }
.lang { width: 41px; padding-left: 5px; font-size: 12px; line-height: 39px; letter-spacing: -.4px; }
.clock { width: 63px; margin-right: 0; padding-right: 4px; text-align: center; font-size: 12px; display: flex; flex-direction: column; align-items: center; line-height: 18px; padding-top: 2px; letter-spacing: -.55px; }
.peek { width: 8px; border-left: 1px solid #777; }
.badge { font: 12px "Open Sans", sans-serif; fill: #fff; }

#chart text { font-family: "Noto Sans", sans-serif; font-size: 12.500px; fill: #808080; }
#chart .dark { fill: #333; }
#chart .head { fill: #333; font-size: 12px; }
#chart .title { fill: #333; font-size: 20px; }
#chart .axis { stroke: #c8c8c8; fill: none; }
#chart .gridline { stroke: #f3f3f3; fill: none; }
```

FILE: app.js
```js
const colors = {
  Australia: '#a0cbe8', Austria: '#ffbe7d', Belgium: '#8cd17d', Brazil: '#b6992d', Canada: '#f1ce63',
  China: '#4e79a7', Denmark: '#499894', France: '#f28e2b', Germany: '#86bcb6', India: '#ff9d9a',
  Italy: '#79706e', Japan: '#e15759', Luxembourg: '#bab0ac', Netherlands: '#d37295', Norway: '#fabfd2',
  Qatar: '#b07aa1', Russia: '#d4a6c8', Singapore: '#9d7660', 'South Korea': '#9d7660', Spain: '#d7b5a6',
  Sweden: '#4e79a7', Switzerland: '#a0cbe8'
};
const names = Object.keys(colors);
document.getElementById('legend').innerHTML = names
  .map(n => `<li><i style="background:${colors[n]}"></i>${n === 'Switzerland' ? '' : n}</li>`).join('');

// Text width of each row header.
const rowWidths = [51, 41, 45, 31, 41, 31, 50, 37, 50, 27, 25, 32, 69, 70, 43, 32, 38];
// country index, pane index, bar width, value
const bars = [
  [2, 1, 2, '239'], [5, 0, 19, '3,008'], [5, 1, 8, '1,097'], [7, 0, 7, '951'], [8, 1, 3, '265'],
  [10, 1, 4, '497'], [12, 0, 5, '687'], [0, 2, 13, '1,981'], [3, 2, 5, '645'], [5, 2, 22, '3,436'],
  [0, 3, 6, '751'], [1, 3, 3, '264'], [2, 3, 4, '551'], [3, 3, 8, '1,216'], [4, 3, 26, '4,061'],
  [5, 3, 123, '19,918'], [6, 3, 6, '799'], [7, 3, 49, '7,774'], [8, 3, 24, '3,764'], [9, 3, 4, '535'],
  [10, 3, 13, '1,957'], [11, 3, 69, '11,122'], [13, 3, 15, '2,207'], [14, 3, 3, '328'], [15, 3, 2, '221'],
  [16, 3, 5, '']
];
const text = (x, y, s, w, anchor = 'start', cls = '') =>
  `<text x="${x}" y="${y}" class="${cls}" text-anchor="${anchor}"${w ? ` textLength="${w}"` : ''}>${s}</text>`;

let out = '<clipPath id="rows"><path d="M377 281h800v325h-800z"/></clipPath>';
out += text(788, 185, 'Total asserts analysis according to year,quater and month', 544, 'middle', 'title');
out += '<path d="M467 281h703v325h-703z" fill="#e6ebef"/>';
out += text(818.5, 215, 'Balance Sheet', 79, 'middle', 'head');
out += text(554, 235, '2016', 28, 'middle') + text(906, 235, '2017', 28, 'middle');
[['Q4', 'December', 56], ['Q2', 'June', 27], ['Q3', 'September', 62], ['Q4', 'December', 56]].forEach(([q, m, w], i) => {
  const x = 466 + 176 * i;
  out += text(x + 88, 255, q, 16, 'middle') + text(x + 88, 275, m, w, 'middle');
  out += `<path class="gridline" d="M${x + 61.5} 281v330M${x + 122.5} 281v330"/>`;
  out += text(x + 2, 626, '0K', 15) + text(x + 61.5, 626, '10K', 22, 'middle') + text(x + 122, 626, '20K', 22, 'middle');
  out += text(x + 88, 650, 'Total Assets Us B', 97, 'middle', 'head');
});
out += text(461, 275, 'Country', 45, 'end', 'head');
out += '<g clip-path="url(#rows)">';
rowWidths.forEach((w, i) => { out += text(461, 295 + 20 * i, names[i], w, 'end'); });
bars.forEach(([c, p, w, v]) => {
  const x = 467 + 176 * p, y = 281 + 20 * c;
  out += `<rect x="${x}" y="${y}" width="${w}" height="19"/>`;
  if (w > 4) out += `<rect x="${x + 2}" y="${y + 2}" width="${w - 4}" height="15" fill="${colors[names[c]]}"/>`;
  const digits = v.replace(',', '').length;
  if (v) out += text(x + w + (w < 4 ? 3 : 2), y + 14, v, digits * 7.1 + (v.includes(',') ? 3.8 : 0), 'start', 'dark');
});
out += '</g>';
out += '<path class="axis" d="M466.5 200v461M642.5 220v441M818.5 240v421M994.5 240v421M1170.5 200v461M386 280.5h785M386 606.5h785"/>';
out += '<path d="M1174 280h17v326h-17z" fill="#f0f0f0"/><path d="M1175 297h15v206h-15z" fill="#cbcbcb"/>';
out += '<path class="arr" d="M1179 291l3.500-3.500 3.500 3.500M1179 596l3.500 3.500 3.500-3.500"/>';
document.getElementById('chart').innerHTML = out;
```
